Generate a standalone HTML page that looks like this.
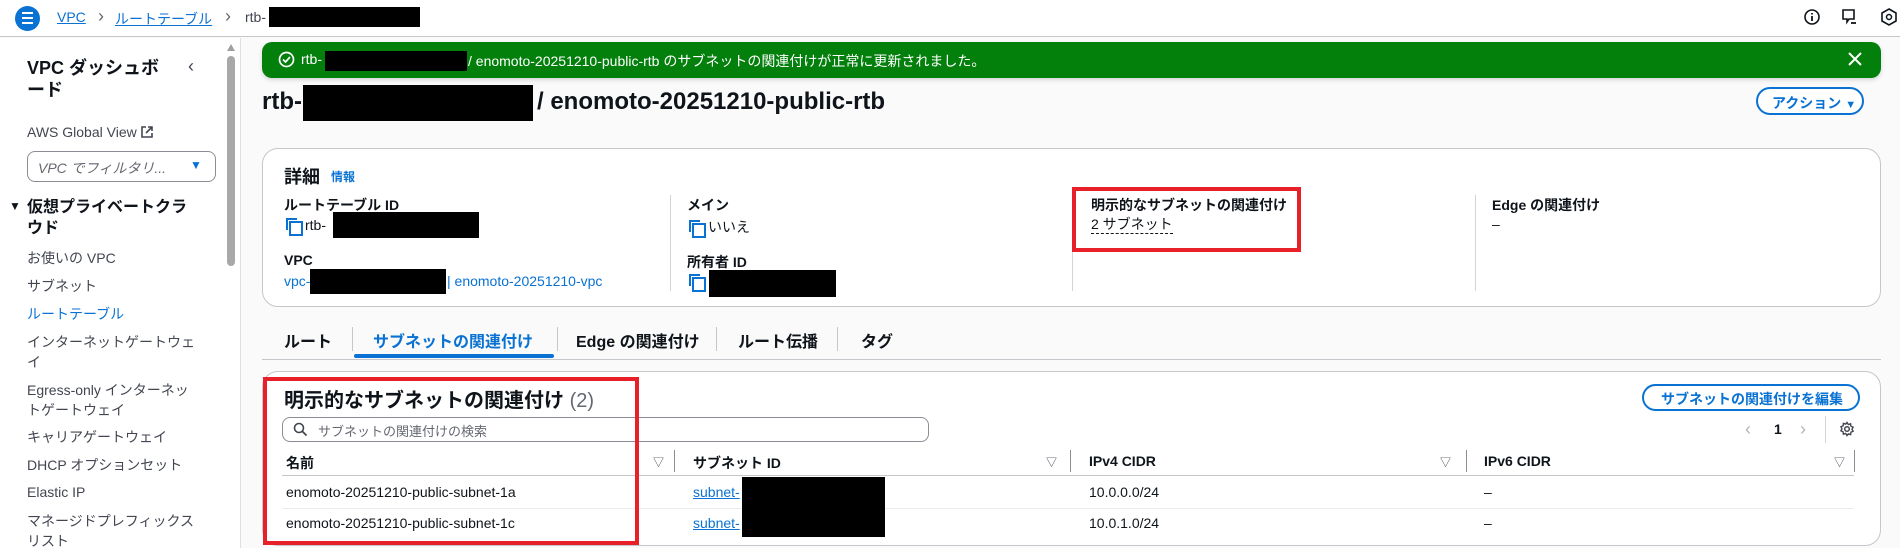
<!DOCTYPE html>
<html style="width:1900px;height:548px;overflow:hidden"><head><meta charset="utf-8"><style>
*{box-sizing:border-box;margin:0;padding:0}
body{width:1900px;height:548px;overflow:hidden;background:#fafafa;font-family:"Liberation Sans","Noto Sans CJK JP",sans-serif;font-size:14px;color:#0f141a;position:relative}
.a{position:absolute;white-space:nowrap}
.blk{position:absolute;background:#000}
.link{color:#0972d3}
.b{font-weight:bold}
.sb{color:#424650}
.cp{display:inline-block;width:13px;height:14px;position:relative;vertical-align:-2px;margin-right:6px}
.cp:before{content:"";position:absolute;left:0;top:0;width:9px;height:10px;border-top:2px solid #0972d3;border-left:2px solid #0972d3}
.cp:after{content:"";position:absolute;left:3px;top:3px;width:10px;height:11px;border:2px solid #0972d3}
.vd{position:absolute;width:1px;background:#d1d5db}
.tri{font-size:11px;color:#424650}
</style></head><body>
<!-- top bar -->
<div class="a" style="left:0;top:0;width:1900px;height:37px;background:#fff;border-bottom:1px solid #c6c6cd"></div>
<div class="a" style="left:15px;top:6px;width:25px;height:25px;border-radius:50%;background:#0972d3"></div>
<div class="a" style="left:22px;top:12px;width:11px;height:2px;background:#fff;box-shadow:0 5px 0 #fff,0 10px 0 #fff"></div>
<div class="a link" style="left:57px;top:9px;text-decoration:underline">VPC</div>
<div class="a" style="left:98px;top:6px;color:#656871;font-size:18px">&#x203A;</div>
<div class="a link" style="left:115px;top:9px;text-decoration:underline">ルートテーブル</div>
<div class="a" style="left:225px;top:6px;color:#656871;font-size:18px">&#x203A;</div>
<div class="a" style="left:245px;top:9px;color:#424650">rtb-</div>
<div class="blk" style="left:269px;top:7px;width:151px;height:20px"></div>
<svg class="a" style="left:1803px;top:8px" width="18" height="18" viewBox="0 0 18 18"><circle cx="9" cy="9" r="7" fill="none" stroke="#0f141a" stroke-width="1.6"/><path d="M9 8v5M9 5v1.5" stroke="#0f141a" stroke-width="1.8"/></svg>
<svg class="a" style="left:1840px;top:8px" width="18" height="18" viewBox="0 0 18 18"><path d="M3 2h11v9H9l-2 3V11H3z" fill="none" stroke="#0f141a" stroke-width="1.6"/><path d="M11 15h5" stroke="#0f141a" stroke-width="1.8"/></svg>
<svg class="a" style="left:1880px;top:7px" width="18" height="20" viewBox="0 0 18 20"><path d="M9 2l7 4v8l-7 4-7-4V6z" fill="none" stroke="#0f141a" stroke-width="1.6"/><circle cx="9" cy="10" r="2.5" fill="none" stroke="#0f141a" stroke-width="1.5"/></svg>

<!-- sidebar -->
<div class="a" style="left:0;top:38px;width:241px;height:510px;background:#fff;border-right:1px solid #e0e0e0"></div>
<div class="a" style="left:227px;top:44px;width:0;height:0;border-left:4px solid transparent;border-right:4px solid transparent;border-bottom:7px solid #a0a0a0"></div>
<div class="a" style="left:227px;top:56px;width:8px;height:210px;border-radius:4px;background:#a8a8a8"></div>
<div class="a b" style="left:27px;top:57px;font-size:18px;line-height:22px">VPC ダッシュボ<br>ード</div>
<div class="a" style="left:188px;top:56px;font-size:18px;color:#424650">&#x2039;</div>
<div class="a sb" style="left:27px;top:124px">AWS Global View <svg width="12" height="12" viewBox="0 0 12 12" style="vertical-align:-1px"><path d="M5 1H1v10h10V7M7 1h4v4M11 1L5 7" fill="none" stroke="#424650" stroke-width="1.6"/></svg></div>
<div class="a" style="left:27px;top:151px;width:189px;height:31px;border:1px solid #8c8c94;border-radius:8px;background:#fff"></div>
<div class="a" style="left:38px;top:158px;color:#656871;font-style:italic">VPC でフィルタリ...</div>
<div class="a link" style="left:190px;top:158px;font-size:12px">&#x25BC;</div>
<div class="a" style="left:9px;top:199px;font-size:12px">&#x25BC;</div>
<div class="a b" style="left:27px;top:197px;font-size:16px;line-height:21px">仮想プライベートクラ<br>ウド</div>
<div class="a sb" style="left:27px;top:248px">お使いの VPC</div>
<div class="a sb" style="left:27px;top:276px">サブネット</div>
<div class="a link" style="left:27px;top:304px">ルートテーブル</div>
<div class="a sb" style="left:27px;top:332px;line-height:20px">インターネットゲートウェ<br>イ</div>
<div class="a sb" style="left:27px;top:380px;line-height:20px">Egress-only インターネッ<br>トゲートウェイ</div>
<div class="a sb" style="left:27px;top:427px">キャリアゲートウェイ</div>
<div class="a sb" style="left:27px;top:455px">DHCP オプションセット</div>
<div class="a sb" style="left:27px;top:484px">Elastic IP</div>
<div class="a sb" style="left:27px;top:511px;line-height:20px">マネージドプレフィックス<br>リスト</div>

<!-- flash -->
<div class="a" style="left:262px;top:42px;width:1619px;height:36px;background:#037f0c;border-radius:10px;box-shadow:0 2px 4px rgba(0,0,0,.15)"></div>
<svg class="a" style="left:278px;top:51px" width="17" height="17" viewBox="0 0 17 17"><circle cx="8.5" cy="8.5" r="7" fill="none" stroke="#fff" stroke-width="1.7"/><path d="M5 8.5l2.5 2.5 4.5-5" fill="none" stroke="#fff" stroke-width="1.7"/></svg>
<div class="a" style="left:301px;top:51px;color:#fff">rtb-</div>
<div class="blk" style="left:325px;top:51px;width:142px;height:20px"></div>
<div class="a" style="left:468px;top:51px;color:#fff">/ enomoto-20251210-public-rtb のサブネットの関連付けが正常に更新されました。</div>
<svg class="a" style="left:1848px;top:52px" width="14" height="14" viewBox="0 0 14 14"><path d="M1 1l12 12M13 1L1 13" stroke="#fff" stroke-width="2"/></svg>

<!-- heading -->
<div class="a b" style="left:262px;top:88px;font-size:24px">rtb-</div>
<div class="blk" style="left:303px;top:85px;width:230px;height:36px"></div>
<div class="a b" style="left:537px;top:88px;font-size:24px">/ enomoto-20251210-public-rtb</div>
<div class="a link b" style="left:1756px;top:87px;width:108px;height:28px;border:2px solid #0972d3;border-radius:16px;background:#fff;padding:4px 0 0 14px;font-size:14px">アクション <span style="font-size:11px">&#x25BC;</span></div>

<!-- details -->
<div class="a" style="left:262px;top:148px;width:1619px;height:159px;background:#fff;border:1px solid #c6c6cd;border-radius:16px"></div>
<div class="a b" style="left:284px;top:163px;font-size:18px">詳細</div>
<div class="a link b" style="left:331px;top:168px;font-size:12px">情報</div>
<div class="vd" style="left:670px;top:195px;height:96px"></div>
<div class="vd" style="left:1072px;top:195px;height:96px"></div>
<div class="vd" style="left:1475px;top:195px;height:96px"></div>
<div class="a b" style="left:284px;top:195px">ルートテーブル ID</div>
<div class="a" style="left:286px;top:217px"><span class="cp"></span>rtb-</div>
<div class="blk" style="left:333px;top:212px;width:146px;height:26px"></div>
<div class="a b" style="left:284px;top:252px">VPC</div>
<div class="a link" style="left:284px;top:273px">vpc-</div>
<div class="blk" style="left:310px;top:269px;width:136px;height:25px"></div>
<div class="a link" style="left:447px;top:273px">| enomoto-20251210-vpc</div>
<div class="a b" style="left:687px;top:195px">メイン</div>
<div class="a" style="left:689px;top:217px"><span class="cp"></span>いいえ</div>
<div class="a b" style="left:687px;top:252px">所有者 ID</div>
<div class="a" style="left:689px;top:273px"><span class="cp"></span></div>
<div class="blk" style="left:709px;top:270px;width:127px;height:27px"></div>
<div class="a b" style="left:1091px;top:195px">明示的なサブネットの関連付け</div>
<div class="a" style="left:1091px;top:216px;border-bottom:1px dashed #0f141a;line-height:17px">2 サブネット</div>
<div class="a b" style="left:1492px;top:195px">Edge の関連付け</div>
<div class="a" style="left:1492px;top:216px">–</div>
<div class="a" style="left:1072px;top:187px;width:229px;height:65px;border:4px solid #e8202a"></div>

<!-- tabs -->
<div class="a" style="left:262px;top:359px;width:1619px;height:1px;background:#c6c6cd"></div>
<div class="a b" style="left:284px;top:328px;font-size:16px">ルート</div>
<div class="a b link" style="left:373px;top:328px;font-size:16px">サブネットの関連付け</div>
<div class="a" style="left:354px;top:354px;width:200px;height:4px;background:#0972d3;border-radius:2px"></div>
<div class="a b" style="left:576px;top:328px;font-size:16px">Edge の関連付け</div>
<div class="a b" style="left:738px;top:328px;font-size:16px">ルート伝播</div>
<div class="a b" style="left:861px;top:328px;font-size:16px">タグ</div>
<div class="vd" style="left:352px;top:327px;height:24px;background:#c6c6cd"></div>
<div class="vd" style="left:557px;top:327px;height:24px;background:#c6c6cd"></div>
<div class="vd" style="left:716px;top:327px;height:24px;background:#c6c6cd"></div>
<div class="vd" style="left:837px;top:327px;height:24px;background:#c6c6cd"></div>

<!-- subnet container -->
<div class="a" style="left:262px;top:371px;width:1619px;height:175px;background:#fff;border:1px solid #c6c6cd;border-radius:16px"></div>
<div class="a b" style="left:284px;top:384px;font-size:20px">明示的なサブネットの関連付け <span style="font-weight:normal;color:#656871">(2)</span></div>
<div class="a link b" style="left:1642px;top:384px;width:218px;height:27px;border:2px solid #0972d3;border-radius:16px;background:#fff;padding:3px 0 0 17px">サブネットの関連付けを編集</div>
<div class="a" style="left:282px;top:417px;width:647px;height:25px;border:1px solid #8c8c94;border-radius:8px;background:#fff"></div>
<svg class="a" style="left:293px;top:422px" width="15" height="15" viewBox="0 0 15 15"><circle cx="6" cy="6" r="4.5" fill="none" stroke="#424650" stroke-width="1.6"/><path d="M9.5 9.5l4 4" stroke="#424650" stroke-width="1.8"/></svg>
<div class="a" style="left:318px;top:421px;color:#656871;font-size:13px">サブネットの関連付けの検索</div>
<div class="a" style="left:1745px;top:419px;color:#b4b4bb;font-size:18px">&#x2039;</div>
<div class="a" style="left:1774px;top:421px;font-weight:bold">1</div>
<div class="a" style="left:1800px;top:419px;color:#b4b4bb;font-size:18px">&#x203A;</div>
<div class="vd" style="left:1825px;top:416px;height:27px"></div>
<svg class="a" style="left:1839px;top:421px" width="16" height="16" viewBox="0 0 16 16"><circle cx="8" cy="8" r="2.3" fill="none" stroke="#424650" stroke-width="1.5"/><path d="M8 1.5l1.3 2 2.3-.7.3 2.4 2.2 1-1.1 2 1.1 2-2.2 1-.3 2.4-2.3-.7L8 14.5l-1.3-2-2.3.7-.3-2.4-2.2-1 1.1-2-1.1-2 2.2-1 .3-2.4 2.3.7z" fill="none" stroke="#424650" stroke-width="1.4"/></svg>
<!-- table header -->
<div class="a b" style="left:286px;top:453px">名前</div>
<div class="a tri" style="left:653px;top:454px">&#x25BD;</div>
<div class="vd" style="left:674px;top:450px;height:22px;background:#8c8c94"></div>
<div class="a b" style="left:693px;top:453px">サブネット ID</div>
<div class="a tri" style="left:1046px;top:454px">&#x25BD;</div>
<div class="vd" style="left:1070px;top:450px;height:22px;background:#8c8c94"></div>
<div class="a b" style="left:1089px;top:453px">IPv4 CIDR</div>
<div class="a tri" style="left:1440px;top:454px">&#x25BD;</div>
<div class="vd" style="left:1466px;top:450px;height:22px;background:#8c8c94"></div>
<div class="a b" style="left:1484px;top:453px">IPv6 CIDR</div>
<div class="a tri" style="left:1834px;top:454px">&#x25BD;</div>
<div class="vd" style="left:1854px;top:450px;height:22px;background:#8c8c94"></div>
<div class="a" style="left:282px;top:475px;width:1572px;height:1px;background:#c6c6cd"></div>
<div class="a" style="left:282px;top:508px;width:1572px;height:1px;background:#e9ebed"></div>
<div class="a" style="left:286px;top:484px">enomoto-20251210-public-subnet-1a</div>
<div class="a" style="left:286px;top:515px">enomoto-20251210-public-subnet-1c</div>
<div class="a link" style="left:693px;top:484px;text-decoration:underline">subnet-</div>
<div class="a link" style="left:693px;top:515px;text-decoration:underline">subnet-</div>
<div class="blk" style="left:742px;top:477px;width:143px;height:60px"></div>
<div class="a" style="left:1089px;top:484px">10.0.0.0/24</div>
<div class="a" style="left:1089px;top:515px">10.0.1.0/24</div>
<div class="a" style="left:1484px;top:484px">–</div>
<div class="a" style="left:1484px;top:515px">–</div>
<div class="a" style="left:263px;top:377px;width:376px;height:168px;border:4px solid #e8202a"></div>
</body></html>
